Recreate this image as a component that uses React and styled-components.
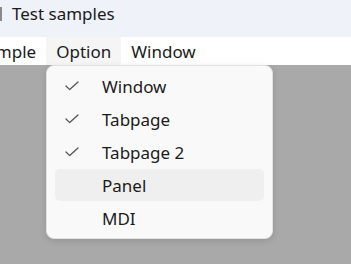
import React from 'react';
import styled, { createGlobalStyle } from 'styled-components';

const Global = createGlobalStyle`
  html, body {
    margin: 0;
    padding: 0;
    width: 351px;
    height: 264px;
    overflow: hidden;
    background: #a9a9a9;
  }
  * { box-sizing: border-box; }
`;

const Window = styled.div`
  width: 351px;
  height: 264px;
  display: flex;
  flex-direction: column;
  font-family: 'Noto Sans', 'Open Sans', sans-serif;
  font-size: 17px;
  color: #1b1b1b;
  background: #a9a9a9;
  overflow: hidden;
`;

const TitleBar = styled.div`
  height: 37px;
  flex: none;
  display: flex;
  align-items: flex-start;
  padding-top: 2px;
  gap: 10px;
  background: #eff3f9;
  line-height: 23px;
`;

const AppIcon = styled.div`
  width: 2px;
  height: 14px;
  margin-top: 5px;
  background: #8a8a8a;
`;

const MenuBar = styled.div`
  height: 28px;
  flex: none;
  display: flex;
  align-items: stretch;
  background: #ffffff;
  margin-left: -33px;
`;

const MenuItem = styled.div`
  display: flex;
  align-items: center;
  padding: 0 10px;
  background: ${p => (p.$open ? '#f5f5f5' : 'transparent')};
`;

const Desk = styled.div`
  flex: 1;
  position: relative;
`;

const Dropdown = styled.div`
  position: absolute;
  left: 46px;
  top: 0;
  width: 227px;
  padding: 4px 8px;
  background: #f9f9f9;
  border: 1px solid #e2e2e2;
  border-radius: 8px;
  box-shadow: 0 2px 6px rgba(0, 0, 0, 0.12);
  display: flex;
  flex-direction: column;
  gap: 1px;
`;

const Entry = styled.div`
  height: 32px;
  display: flex;
  align-items: center;
  border-radius: 5px;
  background: ${p => (p.$hover ? '#efefef' : 'transparent')};
`;

const CheckSlot = styled.div`
  width: 33px;
  margin-right: 14px;
  display: flex;
  justify-content: center;
  align-items: center;
`;

const Check = () => (
  <svg width="14" height="10" viewBox="0 0 14 10">
    <path d="M1 5 L4.7 8.6 L13 1" fill="none" stroke="#555" strokeWidth="1.3" strokeLinecap="round" strokeLinejoin="round" />
  </svg>
);

const items = [
  { label: 'Window', checked: true },
  { label: 'Tabpage', checked: true },
  { label: 'Tabpage 2', checked: true },
  { label: 'Panel', hover: true },
  { label: 'MDI' },
];

export default function App() {
  return (
    <Window>
      <Global />
      <TitleBar>
        <AppIcon />
        <span>Test samples</span>
      </TitleBar>
      <MenuBar>
        <MenuItem>Sample</MenuItem>
        <MenuItem $open>Option</MenuItem>
        <MenuItem>Window</MenuItem>
      </MenuBar>
      <Desk>
        <Dropdown>
          {items.map(it => (
            <Entry key={it.label} $hover={it.hover}>
              <CheckSlot>{it.checked && <Check />}</CheckSlot>
              {it.label}
            </Entry>
          ))}
        </Dropdown>
      </Desk>
    </Window>
  );
}
